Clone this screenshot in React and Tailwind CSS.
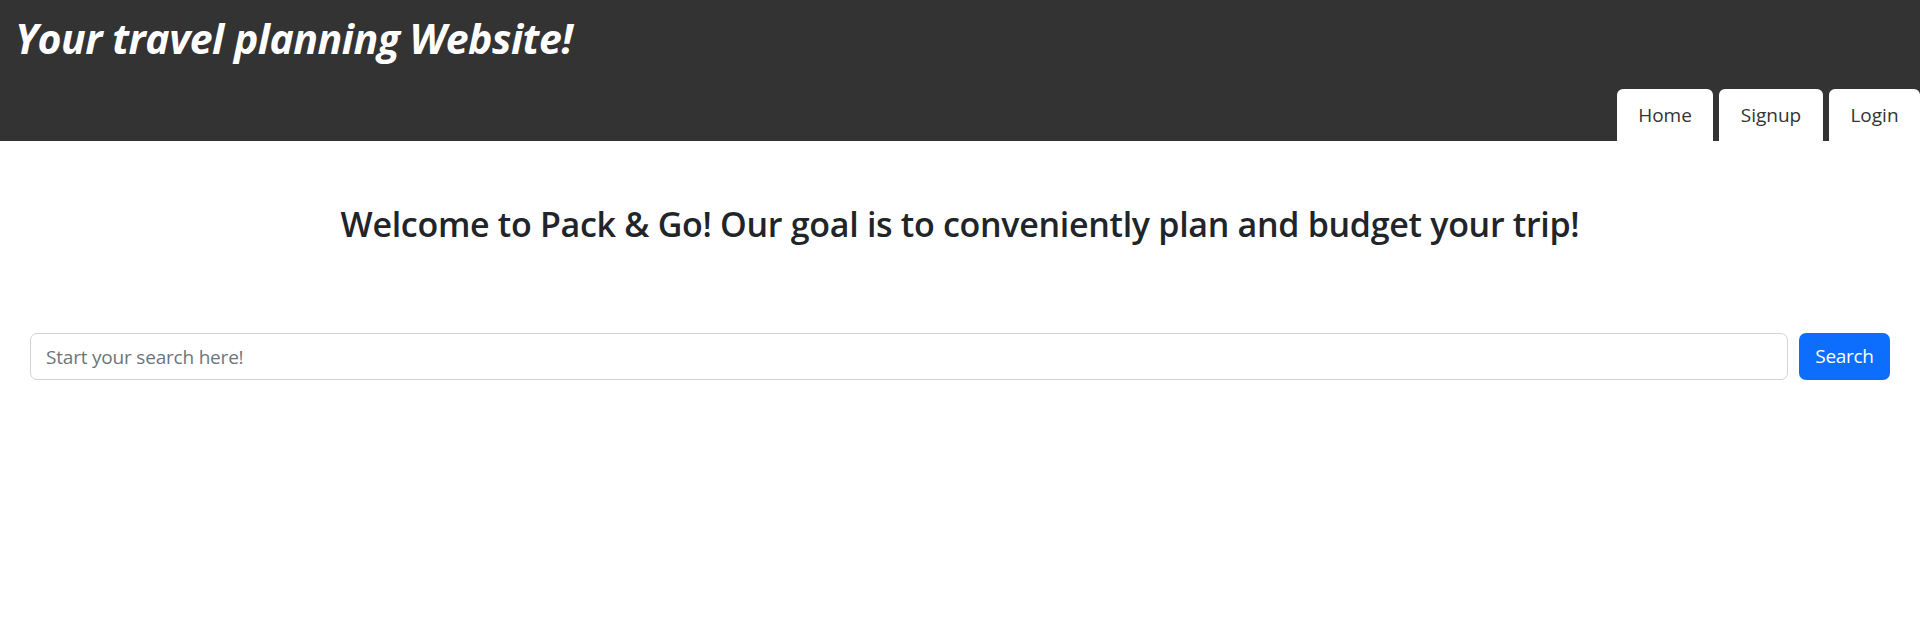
import React from "react";

const App = () => {
  const tabs = ["Home", "Signup", "Login"];

  return (
    <div className="min-h-screen bg-white font-['Open_Sans',sans-serif] text-[#212529]">
      <header className="h-[141px] bg-[#333333] flex flex-col justify-between">
        <h1 className="pl-[15px] pt-[12px] text-[41px] leading-[52px] font-bold italic text-white tracking-[-0.5px]">
          Your travel planning Website!
        </h1>
        <nav className="flex justify-end gap-[6px]">
          {tabs.map((t) => (
            <a
              key={t}
              href="#"
              className={
                "h-[52px] pt-[1px] bg-white rounded-t-[6px] flex items-center justify-center text-[19px] text-[#333333] " +
                (t === "Home" ? "w-[96px]" : t === "Signup" ? "w-[104px]" : "w-[91px]")
              }
            >
              {t}
            </a>
          ))}
        </nav>
      </header>

      <main>
        <h3 className="text-center text-[34px] leading-[44px] font-semibold mt-[61px] tracking-[-0.3px]">
          Welcome to Pack &amp; Go! Our goal is to conveniently plan and budget your trip!
        </h3>

        <div className="flex gap-[11px] px-[30px] mt-[87px]">
          <input
            type="text"
            placeholder="Start your search here!"
            className="flex-1 h-[47px] border border-[#ced4da] rounded-[7px] px-[15px] text-[19px] tracking-[-0.2px] placeholder-[#6c757d] outline-none"
          />
          <button className="h-[47px] w-[91px] bg-[#0d6efd] text-white rounded-[7px] text-[19px] tracking-[-0.3px]">
            Search
          </button>
        </div>
      </main>
    </div>
  );
};

export default App;
